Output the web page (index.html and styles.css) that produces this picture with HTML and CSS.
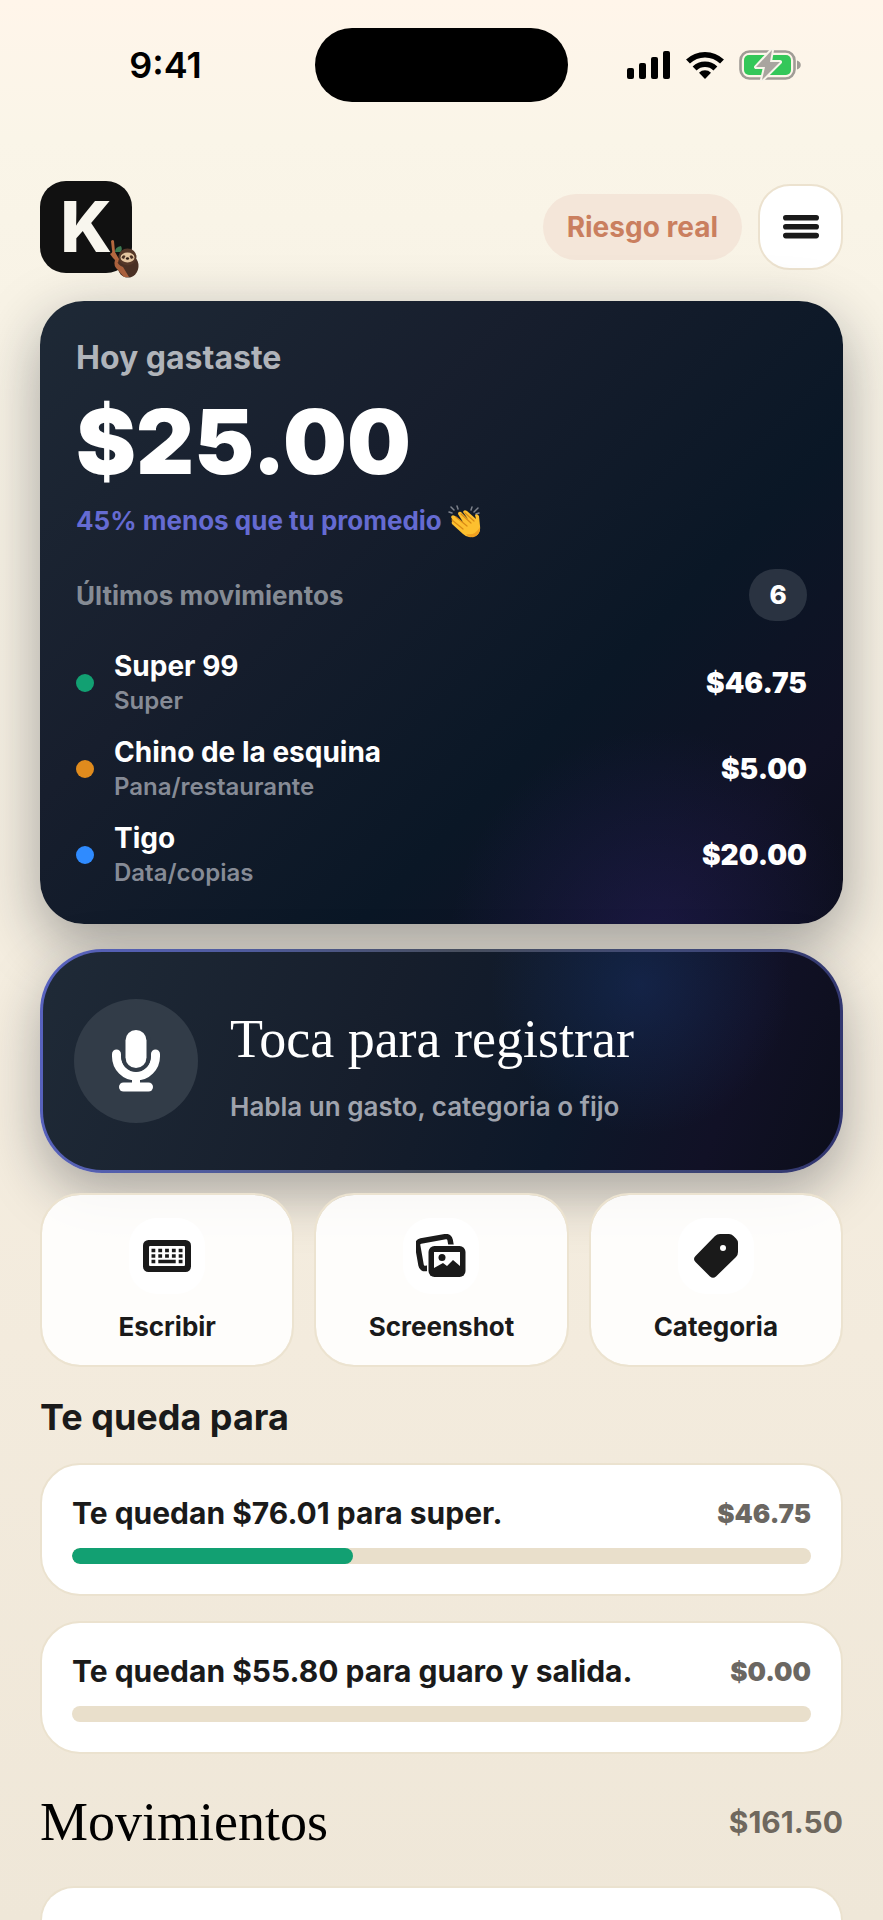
FILE: index.html
```html
<!DOCTYPE html>
<html lang="es">
<head>
<meta charset="utf-8">
<meta name="viewport" content="width=device-width, initial-scale=1">
<title>Inicio</title>
<link rel="stylesheet" href="styles.css">
</head>
<body>
<div class="app">
  <div class="status">
    <time class="status-time">9:41</time>
    <div class="island"></div>
    <div class="status-icons">
      <svg width="44" height="28" viewBox="0 0 44 28" aria-label="Señal"><rect x="0" y="17" width="7" height="11" rx="2"/><rect x="12" y="12" width="7" height="16" rx="2"/><rect x="24" y="6" width="7" height="22" rx="2"/><rect x="36" y="0" width="7" height="28" rx="2"/></svg>
      <svg width="38" height="28" viewBox="0 0 38 28" aria-label="Wi-Fi"><g fill="none" stroke="#000" stroke-width="5.6"><path d="M2 10.6a24.5 24.5 0 0 1 34 0"/><path d="M8.6 17.4a15 15 0 0 1 20.8 0"/></g><path d="M19 28l-6-6.3a8.7 8.7 0 0 1 12 0z"/></svg>
      <svg width="63" height="32" viewBox="0 0 63 32" aria-label="Batería cargando"><rect x="1.5" y="2.5" width="54" height="27" rx="9" fill="none" stroke="#a09c96" stroke-width="2.6"/><path d="M58 11.5c5 1 5 8 0 9z" fill="#a09c96"/><rect x="5" y="6" width="47" height="20" rx="5" fill="#34c759"/><path d="M33 1L17 18h9L23 31 41 13H31z" fill="#a9a59f" stroke="#f8f4ea" stroke-width="4" stroke-linejoin="round" paint-order="stroke"/></svg>
    </div>
  </div>

  <header class="top">
    <a class="logo" href="#" aria-label="Inicio">K
      <svg class="sloth" width="30" height="40" viewBox="0 0 30 40" aria-hidden="true"><ellipse cx="19" cy="27" rx="10.5" ry="11.5" fill="#4a3024"/><ellipse cx="18.5" cy="18" rx="9" ry="8.5" fill="#553728"/><ellipse cx="18.5" cy="18.5" rx="7" ry="5" fill="#e4c5a0"/><path d="M12.5 19q1-4 4-2l-1.500 3zM24.500 19q-1-4-4-2l1.500 3z" fill="#4a3024"/><ellipse cx="18.500" cy="19.500" rx="1.600" ry="1.200" fill="#2d1c15"/><path d="M2 2q2-2 3 0l1 11 4 7-1 4-5-5-3-4q3-1 2-4z" fill="#b5683f"/><path d="M6 13q0-5 6-6 2 4-1 6z" fill="#3c7a52"/><path d="M8 20q0 6 6 8l6 10h-5l-6-7q-5-4-3-10z" fill="#a9603c"/></svg>
    </a>
    <span class="risk">Riesgo real</span>
    <button class="menu" aria-label="Menú"><svg width="36" height="24" viewBox="0 0 36 24" fill="#1a1a1a"><rect width="36" height="5.6" rx="2.8"/><rect y="8.900" width="36" height="5.6" rx="2.8"/><rect y="17.800" width="36" height="5.6" rx="2.8"/></svg></button>
  </header>

  <main>
    <section class="today">
      <h2 class="today-label">Hoy gastaste</h2>
      <p class="today-total">$25.00</p>
      <p class="today-note">45% menos que tu promedio
        <svg width="33" height="33" viewBox="0 0 33 33" role="img" aria-label="Aplausos"><g stroke="#7d828c" stroke-width="1.500" stroke-linecap="round"><path d="M1 7l3 1M3 2l3 3M9 1l1 3M23 5l1-3M26 7l4-4M28 9l3-1"/></g><path d="M3 12q1-3 4-1l8 6-5-8q0-3 3-2l7 7-5-7q1-3 4-1l9 8-1-4q2-2 4 1l1 10q1 8-5 10-7 3-12-2L4 19q-1-3 1-3z" fill="#fdc02f"/><path d="M4 15l11 9M8 12l11 9M13 9l10 9M17 8l9 8" stroke="#d98a16" stroke-width="1.200" fill="none" stroke-linecap="round"/><path d="M18 29q9 2 14-7 0 8-6 10-5 1-8-3z" fill="#f0a020"/></svg>
      </p>
      <div class="recent-head"><h3>Últimos movimientos</h3><span class="count">6</span></div>
      <ul class="recent">
        <li><i class="dot green"></i><div class="who"><strong>Super 99</strong><span>Super</span></div><b>$46.75</b></li>
        <li><i class="dot orange"></i><div class="who"><strong>Chino de la esquina</strong><span>Pana/restaurante</span></div><b>$5.00</b></li>
        <li><i class="dot blue"></i><div class="who"><strong>Tigo</strong><span>Data/copias</span></div><b>$20.00</b></li>
      </ul>
    </section>

    <button class="record">
      <span class="mic"><svg width="48" height="62" viewBox="0 0 48 62" aria-hidden="true"><path d="M4.500 24v2.500a19.500 19.500 0 0 0 39 0V24" fill="none" stroke="#fff" stroke-width="9" stroke-linecap="round"/><rect x="9.500" y="-4" width="29" height="46" rx="14.500" fill="#323c48"/><rect x="13.500" y="0" width="21" height="38" rx="10.500" fill="#fff"/><path d="M20 48h8v6h-8z" fill="#fff"/><rect x="7" y="52.500" width="34" height="9" rx="4.500" fill="#fff"/></svg></span>
      <span class="record-text"><span class="record-title">Toca para registrar</span><span class="record-sub">Habla un gasto, categoria o fijo</span></span>
    </button>

    <div class="actions">
      <button class="action"><span class="action-icon"><svg width="48" height="32" viewBox="0 0 48 32"><rect width="48" height="32" rx="5.500" fill="#1a1a1a"/><rect x="6" y="6" width="36" height="20" rx="1" fill="#fff"/><g fill="none" stroke="#1a1a1a" stroke-width="3.600"><path d="M8.500 10.500h31M8.500 16h31" stroke-dasharray="3.800 3"/><path d="M8.500 21.500h3.800M15.300 21.500h17.400M35.700 21.500h3.800"/></g></svg></span>Escribir</button>
      <button class="action"><span class="action-icon"><svg width="50" height="44" viewBox="0 0 50 44"><rect x="3" y="4.500" width="33" height="28" rx="4" transform="rotate(-10 20 18)" fill="none" stroke="#1a1a1a" stroke-width="5.500"/><rect x="11" y="10.500" width="40" height="34" rx="7" fill="#fff"/><rect x="12.500" y="12" width="37" height="31" rx="6" fill="#1a1a1a"/><path d="M18 18h26v14l-7-6-6 6-4-3-9 5z" fill="#fff"/><circle cx="26" cy="23.500" r="3.500" fill="#1a1a1a"/></svg></span>Screenshot</button>
      <button class="action"><span class="action-icon"><svg width="44" height="44" viewBox="0 0 44 44"><path d="M21 2Q23 0 26 0h9q2.500 0 4.500 2L42 4.500Q44 6.500 44 9v9q0 3-2 5L22 42.500q-3 2.500-6 0L1.500 28q-3-3 0-6z" fill="#1a1a1a"/><circle cx="29" cy="14" r="3" fill="#fff"/></svg></span>Categoria</button>
    </div>

    <h2 class="section-title">Te queda para</h2>
    <div class="budgets">
      <article class="budget">
        <div class="budget-row"><h3>Te quedan $76.01 para super.</h3><span>$46.75</span></div>
        <div class="bar"><div class="fill" style="width:38%"></div></div>
      </article>
      <article class="budget">
        <div class="budget-row"><h3>Te quedan $55.80 para guaro y salida.</h3><span>$0.00</span></div>
        <div class="bar"></div>
      </article>
    </div>

    <div class="moves-head"><h2>Movimientos</h2><span>$161.50</span></div>
    <div class="moves"></div>
  </main>
</div>
</body>
</html>
```
FILE: styles.css
```css
* { box-sizing: border-box; }
body, h2, h3, p, ul { margin: 0; padding: 0; }
body {
  font-family: Inter, "Liberation Sans", sans-serif;
  color: #1a1a1a;
  background: #efe7d8;
}
button { font: inherit; color: inherit; border: 0; cursor: pointer; }
svg { display: block; flex: none; }

.app {
  min-height: 100vh;
  display: flex;
  flex-direction: column;
  background: linear-gradient(180deg, #fff5ea 0, #faf5e8 140px, #f8f3e6 300px, #f3ebdd 70%, #efe7d8 100%);
}

.status {
  display: grid;
  grid-template-columns: 1fr 253px 1fr;
  align-items: center;
  padding-top: 28px;
}
.status-time { font-size: 36px; font-weight: 600; line-height: 40px; text-align: center; padding-left: 16px; color: #000; }
.island { height: 74px; border-radius: 37px; background: #000; }
.status-icons { display: flex; align-items: center; justify-content: center; gap: 15px; padding-right: 22px; }

.top {
  display: flex;
  align-items: center;
  gap: 16px;
  padding: 79px 40px 28px;
}
.logo {
  position: relative;
  width: 92px;
  height: 92px;
  margin-right: auto;
  border-radius: 26px;
  background: #111;
  color: #f8f6ee;
  font-size: 70px;
  font-weight: 800;
  line-height: 92px;
  text-align: center;
  text-decoration: none;
}
.sloth { position: absolute; right: -7px; bottom: -6px; }
.risk {
  padding: 0 24px;
  border-radius: 33px;
  background: #f4e6d9;
  color: #ca7f5f;
  font-size: 28px;
  font-weight: 700;
  line-height: 66px;
}
.menu {
  width: 85px;
  height: 86px;
  display: grid;
  place-items: center;
  padding: 0;
  border: 2px solid #ece2cf;
  border-radius: 32px;
  background: #fff;
}

main { flex: 1; display: flex; flex-direction: column; padding: 0 40px; }

.today {
  padding: 37px 36px 34px;
  border-radius: 44px;
  background:
    radial-gradient(ellipse at 77% 104%, rgba(42, 36, 110, .4), transparent 24%),
    linear-gradient(135deg, #1e2936 0%, #171e2d 35%, #0a1726 66%, #101124 86%, #0c0e1c 100%);
  box-shadow: 0 20px 60px rgba(24, 28, 40, .38);
  color: #fff;
}
.today-label { font-size: 32px; font-weight: 700; line-height: 40px; color: #b0b4ba; }
.today-total { margin: 14px 0 13px; font-size: 90px; font-weight: 900; line-height: 100px; }
.today-note { display: flex; align-items: center; gap: 6px; height: 32px; font-size: 26px; font-weight: 700; line-height: 32px; color: #656bd2; }
.recent-head { display: flex; align-items: center; justify-content: space-between; margin: 32px 0 27px; }
.recent-head h3 { font-size: 26px; font-weight: 700; color: #858b94; }
.count { width: 58px; border-radius: 26px; background: #2a3341; font-size: 26px; font-weight: 800; line-height: 52px; text-align: center; }
.recent { display: grid; gap: 16px; list-style: none; }
.recent li { display: flex; align-items: center; gap: 20px; }
.dot { width: 18px; height: 18px; border-radius: 50%; }
.green { background: #12a072; }
.orange { background: #e08b1d; }
.blue { background: #2f8bff; }
.who { flex: 1; display: grid; }
.who strong { font-size: 28px; font-weight: 700; line-height: 36px; }
.who span { font-size: 24px; font-weight: 600; line-height: 34px; color: #868b96; }
.recent b { font-size: 28px; font-weight: 900; }

.record {
  display: flex;
  align-items: center;
  gap: 32px;
  margin-top: 25px;
  padding: 41px 31px;
  text-align: left;
  border: 3px solid transparent;
  border-radius: 62px;
  background:
    radial-gradient(circle at 75% 15%, rgba(32, 60, 130, .34), transparent 24%) padding-box,
    linear-gradient(110deg, #1f2a37 0%, #161e2c 42%, #0d1829 66%, #111126 84%, #0c0e1b 100%) padding-box,
    linear-gradient(100deg, #5862c0 0%, #4f5b9c 25%, #474e5d 50%, #404a78 75%, #30346f 100%) border-box;
  box-shadow: 0 20px 54px rgba(24, 28, 40, .34);
  color: #fff;
}
.mic { width: 124px; height: 124px; display: grid; place-items: center; border-radius: 50%; background: #323c48; }
.record-text { display: grid; }
.record-title { font-family: "Liberation Serif", serif; font-size: 54px; line-height: 92px; }
.record-sub { font-size: 26px; font-weight: 600; line-height: 44px; color: #9fa3ad; }

.actions { display: grid; grid-template-columns: repeat(3, 1fr); gap: 20px; margin-top: 20px; }
.action {
  display: flex;
  flex-direction: column;
  align-items: center;
  gap: 17px;
  padding: 23px 0 22px;
  border: 2px solid #ece3d0;
  border-radius: 40px;
  background: rgba(255, 255, 255, .88);
  background-clip: padding-box;
  font-size: 26px;
  font-weight: 700;
  line-height: 32px;
}
.action-icon { width: 76px; height: 76px; display: grid; place-items: center; border-radius: 28px; background: #fff; }

.section-title { margin: 28px 0 24px; font-size: 36px; font-weight: 700; line-height: 44px; }
.budgets { display: grid; gap: 25px; }
.budget { padding: 30px; border: 2px solid #ebe2cf; border-radius: 40px; background: #fff; }
.budget-row { display: flex; align-items: center; justify-content: space-between; margin-bottom: 17px; }
.budget-row h3 { font-size: 30px; font-weight: 700; line-height: 36px; }
.budget-row span { font-size: 26px; font-weight: 900; color: #6b6762; }
.bar { height: 16px; border-radius: 8px; background: #e9dfcb; overflow: hidden; }
.fill { height: 100%; border-radius: 8px; background: #12a072; }

.moves-head { display: flex; align-items: center; justify-content: space-between; margin: 32px 0 28px; }
.moves-head h2 { font-family: "Liberation Serif", serif; font-size: 54px; font-weight: 400; line-height: 72px; color: #000; }
.moves-head span { font-size: 30px; font-weight: 700; color: #6f685e; }
.moves { flex: 1; border: 2px solid #ebe2cf; border-bottom: 0; border-radius: 40px 40px 0 0; background: #fff; }
```
